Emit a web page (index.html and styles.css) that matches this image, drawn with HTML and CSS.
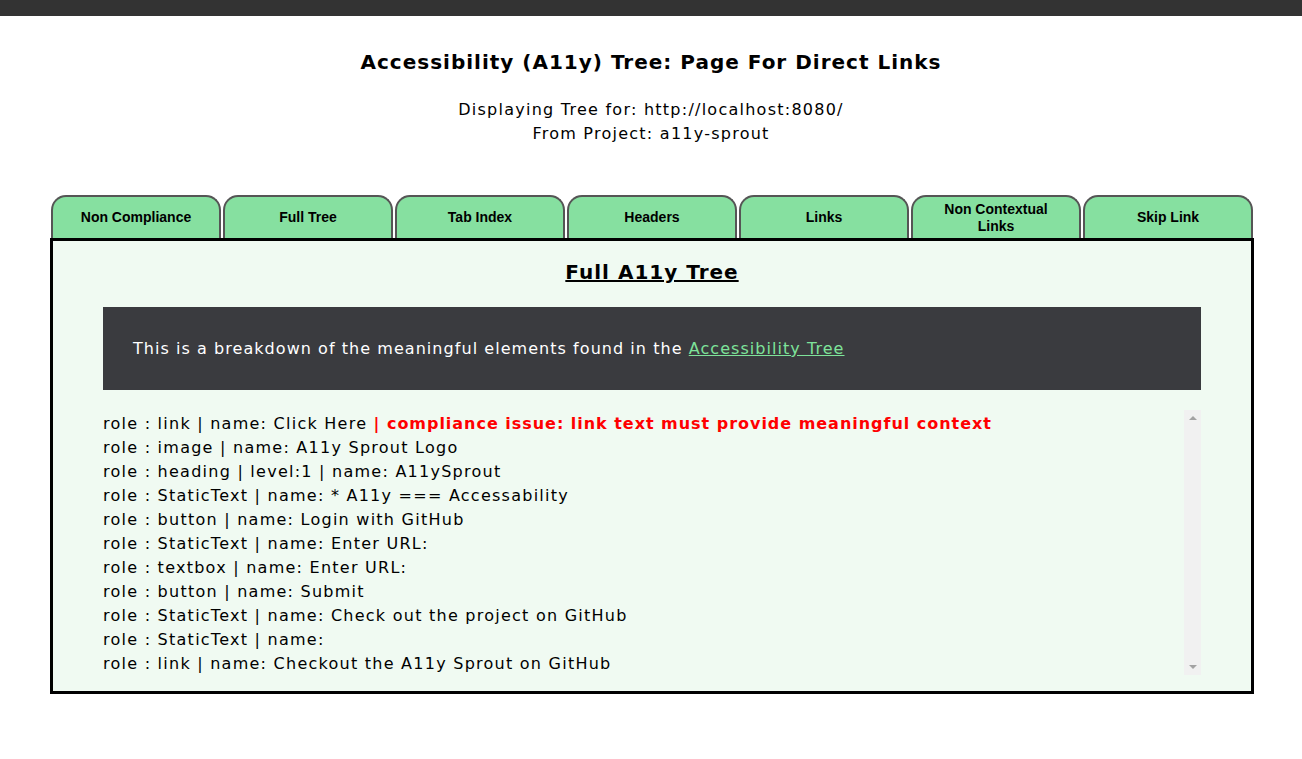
FILE: index.html
```html
<!DOCTYPE html>
<html lang="en">
<head>
<meta charset="utf-8">
<title>Accessibility (A11y) Tree</title>
<link rel="stylesheet" href="styles.css">
</head>
<body>
<div class="topbar"></div>
<header class="page-header">
  <h1 class="page-title">Accessibility (A11y) Tree: Page For Direct Links</h1>
  <p class="meta">Displaying Tree for: http://localhost:8080/<br>From Project: a11y-sprout</p>
</header>
<main class="tabs-wrap">
  <nav class="tabs">
    <button class="tab">Non Compliance</button>
    <button class="tab">Full Tree</button>
    <button class="tab">Tab Index</button>
    <button class="tab">Headers</button>
    <button class="tab">Links</button>
    <button class="tab">Non Contextual Links</button>
    <button class="tab">Skip Link</button>
  </nav>
  <section class="panel">
    <h2 class="panel-title">Full A11y Tree</h2>
    <div class="info">This is a breakdown of the meaningful elements found in the <a href="#" class="info-link">Accessibility Tree</a></div>
    <div class="tree-box">
      <ul class="tree">
        <li>role : link | name: Click Here <strong class="issue">| compliance issue: link text must provide meaningful context</strong></li>
        <li>role : image | name: A11y Sprout Logo</li>
        <li>role : heading | level:1 | name: A11ySprout</li>
        <li>role : StaticText | name: * A11y === Accessability</li>
        <li>role : button | name: Login with GitHub</li>
        <li>role : StaticText | name: Enter URL:</li>
        <li>role : textbox | name: Enter URL:</li>
        <li>role : button | name: Submit</li>
        <li>role : StaticText | name: Check out the project on GitHub</li>
        <li>role : StaticText | name:</li>
        <li>role : link | name: Checkout the A11y Sprout on GitHub</li>
      </ul>
      <div class="scrollbar" aria-hidden="true">
        <span class="arrow arrow-up"></span>
        <span class="arrow arrow-down"></span>
      </div>
    </div>
  </section>
</main>
</body>
</html>
```
FILE: styles.css
```css
html, body {
  margin: 0;
  padding: 0;
  background: #ffffff;
}
body {
  font-family: "DejaVu Sans", Verdana, sans-serif;
  color: #000;
  letter-spacing: 1px;
}
.topbar {
  height: 16px;
  background: #333333;
}
.page-header {
  text-align: center;
  padding-top: 34px;
}
.page-title {
  margin: 0;
  font-size: 20px;
  line-height: 24px;
  font-weight: bold;
}
.meta {
  margin: 24px 0 0;
  font-size: 16px;
  line-height: 24px;
  letter-spacing: 1.25px;
}
.tabs-wrap {
  width: 1204px;
  margin: 49px 0 0 50px;
}
.tabs {
  display: flex;
  gap: 2px;
  padding: 0 1px;
}
.tab {
  width: 170px;
  height: 43px;
  box-sizing: border-box;
  background: #86e0a0;
  border: 2px solid #555;
  border-bottom: none;
  border-radius: 15px 15px 0 0;
  font-family: "Liberation Sans", Arial, sans-serif;
  font-weight: bold;
  font-size: 14px;
  line-height: 17px;
  letter-spacing: 0;
  color: #000;
  padding: 0 20px;
  cursor: pointer;
}
.panel {
  border: 3px solid #000;
  background: #f0faf2;
  padding: 16px 50px 16px;
}
.panel-title {
  margin: 0;
  text-align: center;
  font-size: 20px;
  line-height: 30px;
  text-decoration: underline;
}
.info {
  margin-top: 20px;
  background: #3a3b3f;
  color: #fff;
  font-size: 16px;
  line-height: 24px;
  padding: 30px 30px 29px;
  letter-spacing: 1.05px;
}
.info-link {
  color: #7ee39a;
}
.tree-box {
  display: flex;
  margin-top: 20px;
  height: 265px;
}
.tree {
  flex: 1;
  list-style: none;
  margin: 0;
  padding: 2px 0 0;
  font-size: 16px;
  line-height: 24px;
  letter-spacing: 1.25px;
  overflow: hidden;
}
.issue {
  color: #ff0000;
  letter-spacing: 0.97px;
}
.scrollbar {
  width: 17px;
  background: #f1f1f1;
  display: flex;
  flex-direction: column;
  justify-content: space-between;
  align-items: center;
  padding: 6px 0;
  box-sizing: border-box;
}
.arrow {
  width: 0;
  height: 0;
  border-left: 4px solid transparent;
  border-right: 4px solid transparent;
}
.arrow-up {
  border-bottom: 4px solid #a3a3a3;
}
.arrow-down {
  border-top: 4px solid #a3a3a3;
}
```
